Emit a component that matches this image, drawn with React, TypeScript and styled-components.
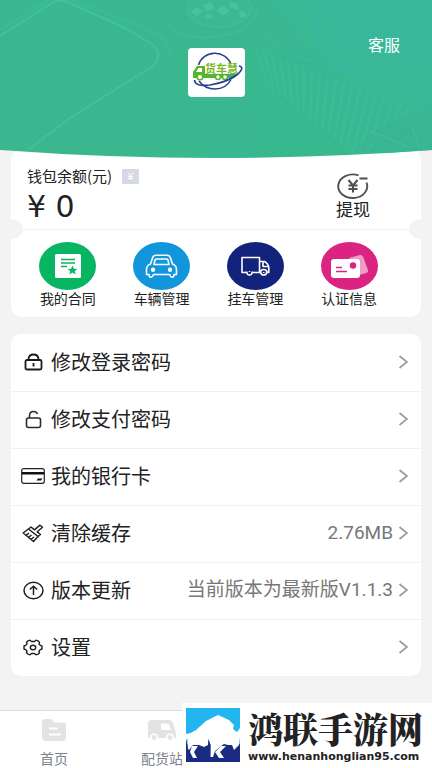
import React from "react";
import styled, { createGlobalStyle } from "styled-components";

const GlobalStyle = createGlobalStyle`
  * { box-sizing: border-box; }
  body {
    margin: 0;
    background: #f3f3f3;
    color: #222;
    font-family: "Noto Sans CJK SC", sans-serif;
  }
  button { font: inherit; color: inherit; background: none; border: 0; padding: 0; cursor: pointer; }
  a { color: inherit; text-decoration: none; }
  svg { display: block; flex: none; }
`;

const Page = styled.div`
  min-height: 100vh;
  display: flex;
  flex-direction: column;
`;

const Header = styled.header`
  position: relative;
  z-index: 1;
  height: 159px;
  padding-top: 48px;
  display: flex;
  justify-content: center;
`;

const HeaderArt = styled.svg`
  position: absolute;
  inset: 0;
  width: 100%;
  height: 100%;
`;

const LogoTile = styled.div`
  position: relative;
  width: 57px;
  height: 49px;
  border-radius: 4px;
  background: #fff;
`;

const ServiceLink = styled.a`
  position: absolute;
  top: 32px;
  right: 32px;
  font-size: 16px;
  line-height: 24px;
  color: #fff;
`;

const Card = styled.section`
  margin: 0 11px;
  background: #fff;
  border-radius: 10px;
`;

const WalletCard = styled(Card)`
  margin-top: -9px;
  margin-bottom: 17px;
`;

const Balance = styled.div`
  position: relative;
  height: 80px;
  padding: 14px 51px 0 16px;
  display: flex;
  justify-content: space-between;
  border-bottom: 1px solid #f3f3f3;
  &::before,
  &::after {
    content: "";
    position: absolute;
    bottom: -10px;
    width: 24px;
    height: 20px;
    border-radius: 50%;
    background: #f3f3f3;
  }
  &::before { left: -12px; }
  &::after { right: -12px; }
`;

const BalanceTitle = styled.div`
  display: flex;
  align-items: center;
  gap: 10px;
  font-size: 15px;
  line-height: 24px;
`;

const Amount = styled.div`
  font-family: "DejaVu Sans", sans-serif;
  font-size: 30px;
  line-height: 38px;
`;

const Withdraw = styled.button`
  display: flex;
  flex-direction: column;
  align-items: center;
  align-self: flex-start;
  padding-top: 9px;
  font-size: 17px;
  line-height: 18px;
`;

const Shortcuts = styled.nav`
  display: grid;
  grid-template-columns: repeat(4, 1fr);
  padding: 12px 25px 11px 10px;
`;

const Shortcut = styled.a`
  display: flex;
  flex-direction: column;
  align-items: center;
  font-size: 14px;
  line-height: 16px;
  white-space: nowrap;
`;

const Disc = styled.span<{ $color: string }>`
  display: flex;
  align-items: center;
  justify-content: center;
  width: 57px;
  height: 48px;
  border-radius: 50%;
  background: ${(p) => p.$color};
`;

const Menu = styled(Card)`
  margin-bottom: 34px;
`;

const MenuRow = styled.button`
  width: 100%;
  height: 57px;
  padding: 0 13px 2px 10px;
  display: flex;
  align-items: center;
  text-align: left;
  & + & { border-top: 1px solid #f1f1f1; }
`;

const MenuIcon = styled.span`
  width: 24px;
  margin-right: 6px;
  display: flex;
  justify-content: center;
`;

const MenuLabel = styled.span`
  flex: 1;
  font-size: 20px;
  line-height: 28px;
  white-space: nowrap;
`;

const MenuValue = styled.span`
  margin-right: 5px;
  font-family: Roboto, "Noto Sans CJK SC", sans-serif;
  font-size: 19px;
  line-height: 28px;
  color: #777;
  white-space: nowrap;
`;

const TabBar = styled.nav`
  margin-top: auto;
  height: 58px;
  display: grid;
  grid-template-columns: repeat(4, 1fr);
  background: #fff;
  border-top: 1px solid #ddd;
`;

const Tab = styled.a`
  display: flex;
  flex-direction: column;
  align-items: center;
  gap: 7px;
  padding-top: 8px;
  font-size: 14px;
  line-height: 20px;
  color: #7d828c;
`;

const SiteBadge = styled.a`
  position: fixed;
  right: 0;
  bottom: 0;
  z-index: 2;
  width: 250px;
  height: 65px;
  padding: 5px 0 0 4px;
  display: flex;
  gap: 8px;
  background: #fff;
`;

const SiteText = styled.span`
  display: flex;
  flex-direction: column;
`;

const SiteName = styled.span`
  font-family: "Noto Serif CJK SC", "Noto Sans CJK SC", serif;
  font-size: 35px;
  font-weight: 900;
  line-height: 40px;
  white-space: nowrap;
`;

const SiteUrl = styled.span`
  font-family: "DejaVu Sans", sans-serif;
  font-size: 11px;
  font-weight: 700;
  line-height: 18px;
`;

const HeaderBackdrop = () => (
  <HeaderArt viewBox="0 0 432 159" preserveAspectRatio="none" aria-hidden="true">
    <defs>
      <linearGradient id="sea" x1="0" y1="0.6" x2="1" y2="0.3">
        <stop offset="0" stopColor="#3ab78e" />
        <stop offset="0.6" stopColor="#39b88f" />
        <stop offset="1" stopColor="#38b89a" />
      </linearGradient>
      <clipPath id="curve">
        <path d="M0 0H432V150Q324 158 216 158Q108 158 0 150Z" />
      </clipPath>
    </defs>
    <g clipPath="url(#curve)">
      <rect width="432" height="159" fill="url(#sea)" />
      <path d="M318 0Q300 40 330 65Q360 85 400 78L432 60V0Z" fill="#38b79c" opacity=".6" />
      <path d="M0 36L52 3Q60 -2 72 4L125 28L150 43Q163 52 156 62Q152 68 140 74L70 118L28 150" fill="none" stroke="#45c5a0" strokeWidth="2" opacity=".75" />
      <path d="M0 30L48 0M72 0L150 30Q170 42 170 54" fill="none" stroke="#3fc09c" strokeWidth="4" opacity=".4" />
      <ellipse cx="219" cy="8" rx="32" ry="19" fill="#3cba95" stroke="#43c09a" strokeWidth="2" opacity=".7" />
      <g fill="#58cbaa" opacity=".5">
        <path d="M190 12l7-5 5 4-4 5zM203 5l8-3 3 6-7 4zM216 10l8-4 6 5-7 5zM229 2l8 1 2 7-8-2zM206 14l7 1-2 4-6-1zM238 12l7-1 2 5-6 2z" />
      </g>
      <path d="M165 22Q185 42 220 36Q250 32 258 8" fill="none" stroke="#41bd98" strokeWidth="3" opacity=".5" />
      <g stroke="#48c39f" strokeWidth="3" opacity=".3">
        {Array.from({ length: 20 }, (_, i) => (
          <path key={i} d={`M${256 + i * 8} ${50 + i * 3}L${268 + i * 6} ${84 + i * 5}`} />
        ))}
      </g>
      <path d="M252 70L330 158M260 50Q340 60 410 105L425 150" fill="none" stroke="#42bf9a" strokeWidth="2" opacity=".3" />
      <path d="M358 150Q370 125 432 108V158Z" fill="#3ab592" opacity=".8" />
      <path d="M370 131L410 147M366 150l10-8M412 128l8 20" stroke="#51c6a6" strokeWidth="1" opacity=".6" />
    </g>
  </HeaderArt>
);

const Logo = () => (
  <svg width="57" height="49" viewBox="0 0 57 49" role="img" aria-label="货车慧">
    <g fill="none" stroke="#27418b" strokeWidth="1.5">
      <path d="M10.500 17A17 16 0 0 1 43 16" />
      <path d="M11 33Q17 41 27 41Q38 41 43 31.500" />
    </g>
    <path d="M5 29V24L9 18H17V26H48L46 30H5Z" fill="#55b52c" />
    <path d="M8 24L10.500 20H14V24Z" fill="#fff" />
    <text x="17" y="25" fontSize="11" fontWeight="700" fill="#79b926">货车慧</text>
    <path d="M38 26H50L46 30H38Z" fill="#36ad7a" />
    <g fill="#fff" stroke="#55b52c" strokeWidth="1.500">
      <circle cx="12" cy="29" r="2.800" />
      <circle cx="30" cy="29" r="2.500" />
      <circle cx="37" cy="29" r="2.500" />
    </g>
    <path d="M51 18Q57 19 50 26Q40 34 22 37Q7 39 6.500 32" fill="none" stroke="#27418b" strokeWidth="1.700" />
  </svg>
);

const YenTag = () => (
  <svg width="17" height="15" viewBox="0 0 17 15">
    <rect width="17" height="15" rx="1.500" fill="#d5d8e5" />
    <path d="M6 4l2.500 3L11 4M8.500 7v4M6 7.500h5M6 9.500h5" fill="none" stroke="#fff" />
  </svg>
);

const WithdrawIcon = () => (
  <svg width="32" height="27" viewBox="0 0 32 27" fill="none" stroke="#505050" strokeWidth="1.900">
    <path d="M21.500 2.400A14.500 11.800 0 1 0 29.500 9.500M22.500 5.500h8" />
    <path d="M11.500 7l4.500 5.500L20.500 7M16 12v7.500M11.500 12.500h9M11.500 16h9" strokeWidth="2" />
  </svg>
);

const ContractIcon = () => (
  <svg width="26" height="24" viewBox="0 0 26 24">
    <rect width="26" height="24" rx="1.500" fill="#fff" />
    <path d="M6 5.500h14M6 9h14M6 12.500h6" stroke="#07b562" strokeWidth="1.500" />
    <path d="M17.500 11.500l1.400 3.200 3.600.2-2.800 2.200 1 3.400-3.200-1.900-3.200 1.900 1-3.400-2.800-2.200 3.600-.2z" fill="#07b562" />
  </svg>
);

const CarIcon = () => (
  <svg width="33" height="25" viewBox="0 0 33 25" fill="none" stroke="#fff" strokeWidth="1.600" strokeLinejoin="round" strokeLinecap="round">
    <path d="M5.500 10L7.500 4Q8.300 1.200 11 1.200H22Q24.700 1.200 25.500 4L27.500 10Q31.500 11.500 31.500 15.500V20.500H29Q29 23.200 27 23.200Q25.500 23.200 24.500 20.500H8.500Q7.500 23.200 6 23.200Q4 23.200 4 20.500H1.500V15.500Q1.500 11.500 5.500 10Z" />
    <path d="M9 10.500L10 6Q10.300 5 11.500 5H21.500Q22.700 5 23 6L24 10.500Z" />
    <g fill="#fff" stroke="none"><circle cx="8" cy="15.800" r="2.200" /><circle cx="25" cy="15.800" r="2.200" /></g>
  </svg>
);

const TrailerIcon = () => (
  <svg width="29" height="20" viewBox="0 0 29 20" fill="none" stroke="#fff" strokeWidth="1.600" strokeLinejoin="round">
    <path d="M5.500 16.500H1V1.500H18.500V16.500H11.500M18.500 5.500H23.500Q27.800 8 27.800 12V16.500H26M22 5.500V10.500H27.500" />
    <path d="M5.500 15.500Q6 19 8.500 19T11.500 15.500M19.500 16Q20 19 22.700 19T26 16Q25.500 13.500 22.700 13.500T19.500 16M8.500 15v1M22.700 16v1" />
  </svg>
);

const IdentityIcon = () => (
  <svg width="39" height="25" viewBox="0 0 39 25">
    <path d="M19 4L30 1Q32 .500 33 2.500L38 16Q38.500 18 36.500 19L29 21Z" fill="#f09bc7" />
    <rect x="1" y="5" width="29" height="19" rx="3" fill="#fff" />
    <circle cx="23" cy="11.500" r="3.200" fill="#db2482" />
    <path d="M6 13.500h6M6 17.500h11" stroke="#db2482" strokeWidth="1.500" />
  </svg>
);

const LockIcon = () => (
  <svg width="19" height="18" viewBox="0 0 19 18" fill="none" stroke="#1b1b1b" strokeWidth="1.800">
    <rect x="1.500" y="7" width="16" height="9.500" rx="1.500" />
    <path d="M4.500 7V6Q5 1.500 9.500 1.500T14.500 6V7M9.500 10v3.500" />
  </svg>
);

const UnlockIcon = () => (
  <svg width="17" height="19" viewBox="0 0 17 19" fill="none" stroke="#2b2b2b" strokeWidth="1.600">
    <rect x="1.500" y="8" width="14" height="9.500" rx="2" />
    <path d="M4.500 8V6Q4.500 1.500 8.500 1.500Q11.500 1.500 12.500 4" />
  </svg>
);

const BankCardIcon = () => (
  <svg width="24" height="16" viewBox="0 0 24 16">
    <rect x=".700" y=".700" width="22.600" height="14.600" rx="2" fill="none" stroke="#222" strokeWidth="1.200" />
    <path d="M1 4h22v2.500H1zM17 10.500h4.500l-1.500 2h-4.500z" fill="#111" />
  </svg>
);

const BrushIcon = () => (
  <svg width="22" height="19" viewBox="0 0 22 19" fill="none" stroke="#222" strokeWidth="1.500" strokeLinejoin="round">
    <path d="M9 3L12.500 5.800L18 1.200L20.500 3.300L15.200 7.800L18.500 10.500L16 12.500L6.500 5Z" />
    <path d="M6.500 5L1.200 9L11.500 17.500L16 12.500M4 11.300L7 9M6.500 13.400L9.500 11M9 15.500L12 13" />
  </svg>
);

const UpdateIcon = () => (
  <svg width="21" height="19" viewBox="0 0 21 19" fill="none" stroke="#222" strokeWidth="1.500">
    <ellipse cx="10.500" cy="9.500" rx="9.500" ry="8.200" />
    <path d="M10.500 14V5.500M6.800 8.500L10.500 5.200L14.200 8.500" />
  </svg>
);

const SettingsIcon = () => (
  <svg width="20" height="17" viewBox="0 0 20 17" fill="none" stroke="#222" strokeWidth="1.400" strokeLinejoin="round">
    <path d="M5 1.800L7 1.200L8.500 2.500H11.500L13 1.200L15 1.800L16.500 3.200L16 5L17.300 6.300L19 7V10L17.300 10.700L16 12L16.500 13.800L15 15.200L13 15.800L11.500 14.500H8.500L7 15.800L5 15.200L3.500 13.800L4 12L2.700 10.700L1 10V7L2.700 6.300L4 5L3.500 3.200Z" />
    <ellipse cx="10" cy="8.500" rx="2.700" ry="2.300" />
  </svg>
);

const Chevron = () => (
  <svg width="10" height="14" viewBox="0 0 10 14" fill="none" stroke="#9c9c9c" strokeWidth="1.800">
    <path d="M1.500 1L9 7L1.500 13" />
  </svg>
);

const HomeIcon = () => (
  <svg width="26" height="22" viewBox="0 0 26 22">
    <path d="M4 0H9Q11 0 12 2L13 3.500H22Q25 3.500 25 6.500V18Q25 22 21 22H5Q1 22 1 18V3Q1 0 4 0Z" fill="#e3e3e3" />
    <path d="M9 9.500h7M9 15.500h10" stroke="#fff" strokeWidth="2.200" strokeLinecap="round" />
  </svg>
);

const FreightIcon = () => (
  <svg width="28" height="22" viewBox="0 0 28 22">
    <path d="M4 1H21Q24 1 25 4L27 11Q28 13 28 15V19H0V5Q0 1 4 1Z" fill="#e3e3e3" />
    <path d="M13 4.500h7.500L23 11H15Q13 11 13 9Z" fill="#fff" />
    <g fill="#e3e3e3" stroke="#fff" strokeWidth="1.500"><circle cx="6" cy="18.500" r="3.200" /><circle cx="22" cy="18.500" r="3.200" /></g>
  </svg>
);

const BisonLogo = () => (
  <svg width="54" height="54" viewBox="0 0 54 54">
    <rect width="54" height="54" fill="#22b5ef" />
    <path d="M0 36H54V54H0Z" fill="#1b2a82" />
    <path d="M0 26Q6 25 10 22L20 13L32 7L43 12L48 17L47 21L51 24L54 20V29L53 37L51 39L48 42L46 37H42L38 36L35 38L29 43L27 49H24L24.500 37L22.500 31L22 37L18 39L13 37H7L3 42L1.500 40L1.500 30L0 33Z" fill="#fff" />
    <path d="M6 38H12L8 44L11 50H7L4 44ZM35 38H40L34 44L38 50H33L29 44Z" fill="#fff" />
    <path d="M22.500 31L24.500 37V49H22V37ZM0 31L2 40H0Z" fill="#1b2a82" />
    <path d="M47 9Q48 13 51 15Q53 18 50 23L47.500 20L49 17Q46 15 47 9Z" fill="#22b5ef" />
  </svg>
);

const shortcuts = [
  { label: "我的合同", color: "#07b562", icon: <ContractIcon /> },
  { label: "车辆管理", color: "#1296db", icon: <CarIcon /> },
  { label: "挂车管理", color: "#13227a", icon: <TrailerIcon /> },
  { label: "认证信息", color: "#db2482", icon: <IdentityIcon /> },
];

const menu = [
  { label: "修改登录密码", icon: <LockIcon /> },
  { label: "修改支付密码", icon: <UnlockIcon /> },
  { label: "我的银行卡", icon: <BankCardIcon /> },
  { label: "清除缓存", icon: <BrushIcon />, value: "2.76MB" },
  { label: "版本更新", icon: <UpdateIcon />, value: "当前版本为最新版V1.1.3" },
  { label: "设置", icon: <SettingsIcon /> },
];

export default function App() {
  return (
    <Page>
      <GlobalStyle />
      <Header>
        <HeaderBackdrop />
        <LogoTile><Logo /></LogoTile>
        <ServiceLink href="#service">客服</ServiceLink>
      </Header>
      <WalletCard>
        <Balance>
          <div>
            <BalanceTitle>钱包余额(元)<YenTag /></BalanceTitle>
            <Amount>¥ 0</Amount>
          </div>
          <Withdraw type="button"><WithdrawIcon />提现</Withdraw>
        </Balance>
        <Shortcuts>
          {shortcuts.map((s) => (
            <Shortcut key={s.label} href="#shortcut">
              <Disc $color={s.color}>{s.icon}</Disc>
              {s.label}
            </Shortcut>
          ))}
        </Shortcuts>
      </WalletCard>
      <Menu>
        {menu.map((m) => (
          <MenuRow key={m.label} type="button">
            <MenuIcon>{m.icon}</MenuIcon>
            <MenuLabel>{m.label}</MenuLabel>
            {m.value && <MenuValue>{m.value}</MenuValue>}
            <Chevron />
          </MenuRow>
        ))}
      </Menu>
      <TabBar>
        <Tab href="#home"><HomeIcon />首页</Tab>
        <Tab href="#freight"><FreightIcon />配货站</Tab>
      </TabBar>
      <SiteBadge href="#site">
        <BisonLogo />
        <SiteText>
          <SiteName>鸿联手游网</SiteName>
          <SiteUrl>www.henanhonglian95.com</SiteUrl>
        </SiteText>
      </SiteBadge>
    </Page>
  );
}
